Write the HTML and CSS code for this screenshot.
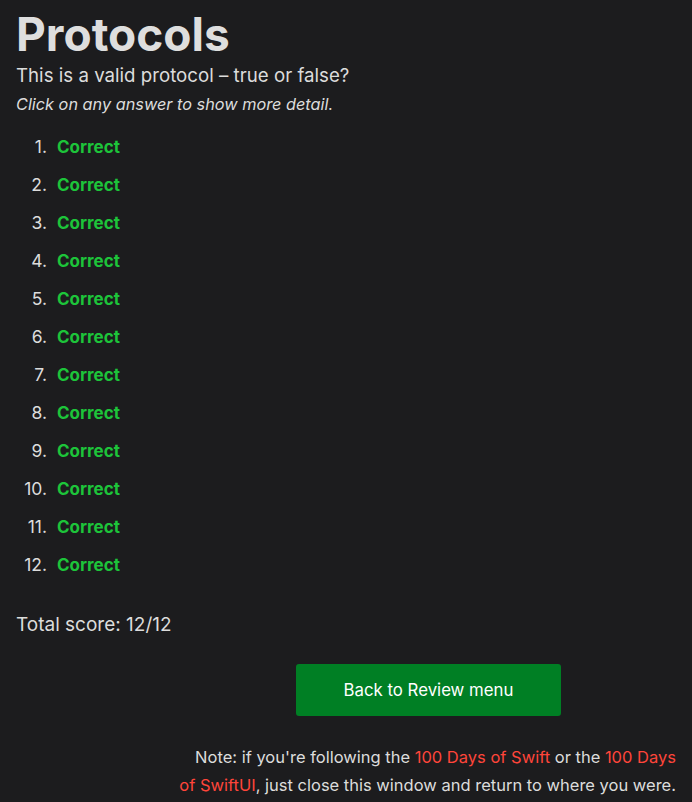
FILE: index.html
```html
<!DOCTYPE html>
<html lang="en">
<head>
<meta charset="utf-8">
<title>Protocols</title>
<link rel="stylesheet" href="styles.css">
</head>
<body>
<main class="page">
  <h1 class="title">Protocols</h1>
  <p class="question">This is a valid protocol – true or false?</p>
  <p class="hint">Click on any answer to show more detail.</p>
  <ol class="answers">
    <li class="answer"><span class="num">1.</span><span class="result">Correct</span></li>
    <li class="answer"><span class="num">2.</span><span class="result">Correct</span></li>
    <li class="answer"><span class="num">3.</span><span class="result">Correct</span></li>
    <li class="answer"><span class="num">4.</span><span class="result">Correct</span></li>
    <li class="answer"><span class="num">5.</span><span class="result">Correct</span></li>
    <li class="answer"><span class="num">6.</span><span class="result">Correct</span></li>
    <li class="answer"><span class="num">7.</span><span class="result">Correct</span></li>
    <li class="answer"><span class="num">8.</span><span class="result">Correct</span></li>
    <li class="answer"><span class="num">9.</span><span class="result">Correct</span></li>
    <li class="answer"><span class="num">10.</span><span class="result">Correct</span></li>
    <li class="answer"><span class="num">11.</span><span class="result">Correct</span></li>
    <li class="answer"><span class="num">12.</span><span class="result">Correct</span></li>
  </ol>
  <p class="score">Total score: 12/12</p>
  <div class="actions">
    <a class="button" href="#">Back to Review menu</a>
  </div>
  <p class="note">Note: if you're following the <a class="link" href="#">100 Days of Swift</a> or the <a class="link" href="#">100 Days of SwiftUI</a>, just close this window and return to where you were.</p>
</main>
</body>
</html>
```

FILE: styles.css
```css
html, body {
  margin: 0;
  padding: 0;
  background: #1c1c1e;
}
body {
  font-family: Inter, "Noto Sans", sans-serif;
  color: #dcdcdc;
}
.page {
  padding: 0 16px;
}
.title {
  margin: 0;
  padding-top: 6px;
  font-size: 46px;
  font-weight: 700;
  line-height: 56px;
  color: #dedede;
}
.question {
  margin: 0;
  font-size: 18.7px;
  line-height: 28px;
}
.hint {
  margin: 0;
  padding-top: 1px;
  font-size: 16.3px;
  font-style: italic;
  line-height: 27px;
}
.answers {
  list-style: none;
  margin: 18px 0 0;
  padding: 0;
  display: flex;
  flex-direction: column;
  gap: 16px;
}
.answer {
  display: flex;
  gap: 10px;
  font-size: 17px;
  line-height: 22px;
}
.num {
  width: 31px;
  text-align: right;
  font-size: 17.5px;
}
.result {
  color: #1dc43a;
  font-weight: 700;
}
.score {
  margin: 35px 0 0;
  font-size: 19px;
  line-height: 28px;
}
.actions {
  display: flex;
  margin-top: 25px;
  padding-left: 280px;
}
.button {
  display: flex;
  align-items: center;
  justify-content: center;
  width: 265px;
  height: 52px;
  background: #007f24;
  color: #ffffff;
  border-radius: 3px;
  font-size: 16.8px;
  text-decoration: none;
}
.note {
  margin: 27px 0 0 auto;
  max-width: 500px;
  text-align: right;
  font-size: 16.5px;
  line-height: 28px;
}
.link {
  color: #ff453a;
  text-decoration: none;
}
```
